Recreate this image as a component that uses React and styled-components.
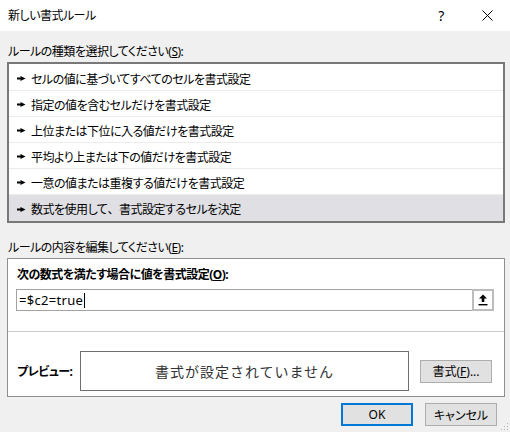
import React from "react";
import styled, { createGlobalStyle } from "styled-components";

const Global = createGlobalStyle`
  html, body { margin: 0; padding: 0; background: #f0f0f0; }
  * { box-sizing: border-box; }
`;

const Window = styled.div`
  width: 510px;
  height: 432px;
  display: flex;
  flex-direction: column;
  background: #f0f0f0;
  position: relative;
  font-family: "Noto Sans", "Noto Sans CJK JP", sans-serif;
  font-size: 12px;
  letter-spacing: -0.5px;
  color: #000;
  font-feature-settings: "palt";
  overflow: hidden;
`;

const TitleBar = styled.div`
  height: 31px;
  background: #fff;
  display: flex;
  align-items: center;
`;

const TitleText = styled.div`
  flex: 1;
  padding-left: 8px;
  line-height: 16px;
`;

const CaptionButton = styled.div`
  width: 46px;
  height: 31px;
  display: flex;
  align-items: center;
  justify-content: center;
  font-size: 14px;
`;

const Body = styled.div`
  flex: 1;
  display: flex;
  flex-direction: column;
  padding: 0 5px 0 7px;
  border-left: 1px solid #a8a8a8;
  margin-left: -1px;
`;

const SectionLabel = styled.div`
  line-height: 16px;
  margin-top: ${(p) => p.$top}px;
  margin-left: 1px;
`;

const ListBox = styled.div`
  margin-top: 2px;
  height: 161px;
  border: 2px solid #787878;
  background: #fff;
  padding-top: 1px;
`;

const Row = styled.div`
  height: 26px;
  display: flex;
  align-items: center;
  gap: 5px;
  padding-left: 8px;
  padding-top: 2px;
  border-bottom: ${(p) => (p.$last ? "none" : "1px solid #ececec")};
  background: ${(p) => (p.$selected ? "#dfdfe4" : "#fff")};
`;

const FullWidth = styled.span`
  font-feature-settings: normal;
`;

const GroupBox = styled.div`
  margin-top: 2px;
  height: 139px;
  border: 1px solid #8f8f8f;
  background: #fff;
  display: flex;
  flex-direction: column;
`;

const FormulaSection = styled.div`
  padding: 8px 10px 20px 8px;
`;

const BoldLabel = styled.div`
  font-weight: 700;
  line-height: 16px;
  margin-left: 1px;
`;

const InputBox = styled.div`
  margin-top: 6px;
  height: 22px;
  border: 1px solid #a3a3a3;
  display: flex;
  align-items: center;
`;

const InputText = styled.div`
  flex: 1;
  padding-left: 2px;
  font-size: 13px;
  letter-spacing: 0.3px;
  display: flex;
  align-items: center;
  font-feature-settings: normal;
`;

const Caret = styled.span`
  display: inline-block;
  width: 1px;
  height: 15px;
  background: #000;
  margin-left: 1px;
`;

const UploadButton = styled.div`
  width: 22px;
  height: 22px;
  margin: -1px -1px -1px 0;
  border: 2px solid #bcbcbc;
  background: #fff;
  display: flex;
  align-items: center;
  justify-content: center;
`;

const Separator = styled.div`
  height: 1px;
  background: #cbcbcb;
`;

const PreviewSection = styled.div`
  padding: 19px 10px 0 9px;
  display: flex;
  align-items: center;
`;

const PreviewLabel = styled.div`
  width: 63px;
  font-weight: 700;
`;

const PreviewBox = styled.div`
  width: 329px;
  height: 40px;
  border: 1px solid #6e6e6e;
  display: flex;
  align-items: center;
  justify-content: center;
  font-size: 14px;
  letter-spacing: 1px;
  color: #333;
  font-feature-settings: normal;
`;

const Button = styled.div`
  width: 72px;
  height: 23px;
  background: #e1e1e1;
  border: ${(p) => (p.$default ? "2px solid #0078d7" : "1px solid #adadad")};
  display: flex;
  align-items: center;
  justify-content: center;
  letter-spacing: 0;
  margin-left: ${(p) => p.$ml || 0}px;
`;

const Footer = styled.div`
  margin-top: 6px;
  display: flex;
  justify-content: flex-end;
  gap: 12px;
  padding-right: 8px;
`;

const Grip = styled.svg`
  position: absolute;
  right: 1px;
  bottom: 1px;
`;

const Arrow = () => (
  <svg width="9" height="5" viewBox="0 0 9 5">
    <rect x="0" y="1.5" width="4" height="2" fill="#000" />
    <path d="M3.5 0 L8.5 2.5 L3.5 5 Z" fill="#000" />
  </svg>
);

const UpIcon = () => (
  <svg width="10" height="12" viewBox="0 0 10 12">
    <path d="M5 0.5 L9 4.5 L6.3 4.5 L6.3 8 L3.7 8 L3.7 4.5 L1 4.5 Z" fill="#000" />
    <rect x="0.5" y="10" width="9" height="1.4" fill="#000" />
  </svg>
);

const rules = [
  ["セルの値に基づいてすべてのセルを書式設定"],
  ["指定の値を含むセルだけを書式設定"],
  ["上位または下位に入る値だけを書式設定"],
  ["平均より上または下の値だけを書式設定"],
  ["一意の値または重複する値だけを書式設定"],
  ["数式を使用して", "、", "書式設定するセルを決定"],
];

export default function App() {
  return (
    <Window>
      <Global />
      <TitleBar>
        <TitleText>新しい書式ルール</TitleText>
        <CaptionButton>?</CaptionButton>
        <CaptionButton>
          <svg width="11" height="11" viewBox="0 0 11 11">
            <path d="M0.5 0.5 L10.5 10.5 M10.5 0.5 L0.5 10.5" stroke="#000" strokeWidth="1" />
          </svg>
        </CaptionButton>
      </TitleBar>
      <Body>
        <SectionLabel $top={13}>
          ルールの種類を選択してください(<u>S</u>):
        </SectionLabel>
        <ListBox>
          {rules.map((r, i) => (
            <Row key={r.join("")} $selected={i === rules.length - 1} $last={i === rules.length - 1}>
              <Arrow />
              <span>
                {r[0]}
                {r[1] && <FullWidth>{r[1]}</FullWidth>}
                {r[2]}
              </span>
            </Row>
          ))}
        </ListBox>
        <SectionLabel $top={17}>
          ルールの内容を編集してください(<u>E</u>):
        </SectionLabel>
        <GroupBox>
          <FormulaSection>
            <BoldLabel>
              次の数式を満たす場合に値を書式設定(<u>O</u>):
            </BoldLabel>
            <InputBox>
              <InputText>
                =$c2=true
                <Caret />
              </InputText>
              <UploadButton>
                <UpIcon />
              </UploadButton>
            </InputBox>
          </FormulaSection>
          <Separator />
          <PreviewSection>
            <PreviewLabel>プレビュー:</PreviewLabel>
            <PreviewBox>書式が設定されていません</PreviewBox>
            <Button $ml={11}>
              書式(<u>F</u>)...
            </Button>
          </PreviewSection>
        </GroupBox>
        <Footer>
          <Button $default>OK</Button>
          <Button>キャンセル</Button>
        </Footer>
      </Body>
      <Grip width="10" height="10" viewBox="0 0 10 10">
        {[
          [8, 2], [8, 5], [5, 5], [8, 8], [5, 8], [2, 8],
        ].map(([x, y]) => (
          <rect key={`${x}-${y}`} x={x} y={y} width="1" height="1" fill="#b8b8b8" />
        ))}
      </Grip>
    </Window>
  );
}
